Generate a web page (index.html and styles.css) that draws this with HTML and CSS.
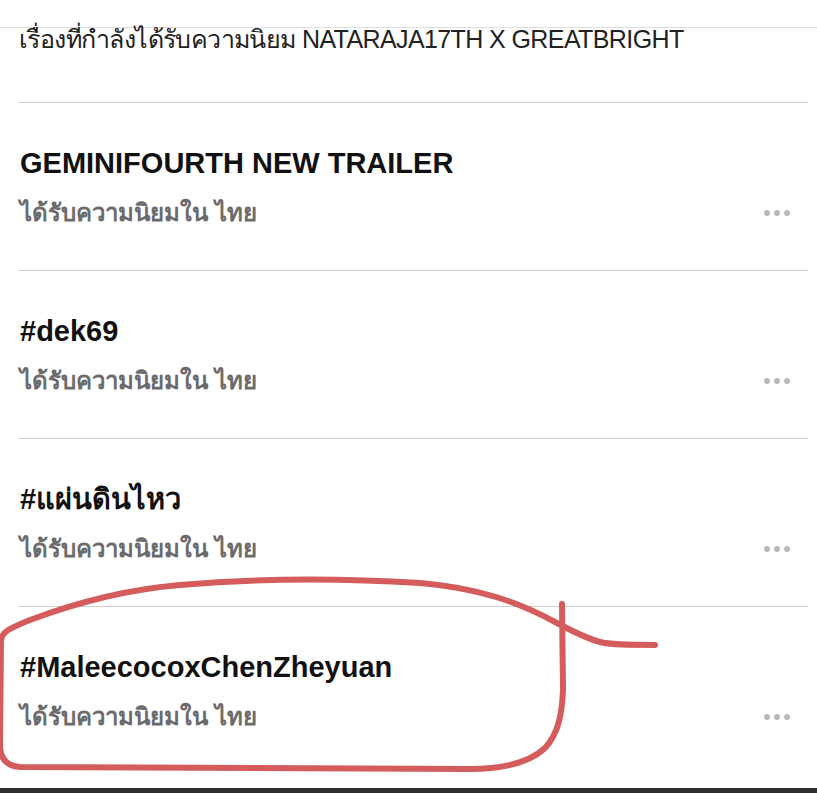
FILE: index.html
```html
<!DOCTYPE html>
<html lang="th">
<head>
<meta charset="utf-8">
<link rel="stylesheet" href="styles.css">
</head>
<body>
<div class="page">
  <div class="top">
    <p class="top-text">เรื่องที่กำลังได้รับความนิยม NATARAJA17TH X GREATBRIGHT</p>
  </div>
  <ul class="trends">
    <li class="trend">
      <div class="trend-title">GEMINIFOURTH NEW TRAILER</div>
      <div class="trend-meta"><span>ได้รับความนิยมใน ไทย</span><span class="more"><i></i><i></i><i></i></span></div>
    </li>
    <li class="trend">
      <div class="trend-title">#dek69</div>
      <div class="trend-meta"><span>ได้รับความนิยมใน ไทย</span><span class="more"><i></i><i></i><i></i></span></div>
    </li>
    <li class="trend">
      <div class="trend-title">#แผ่นดินไหว</div>
      <div class="trend-meta"><span>ได้รับความนิยมใน ไทย</span><span class="more"><i></i><i></i><i></i></span></div>
    </li>
    <li class="trend">
      <div class="trend-title">#MaleecocoxChenZheyuan</div>
      <div class="trend-meta"><span>ได้รับความนิยมใน ไทย</span><span class="more"><i></i><i></i><i></i></span></div>
    </li>
  </ul>
  <div class="bottom-bar"></div>
  <svg class="annotation" width="817" height="793" viewBox="0 0 817 793" aria-hidden="true">
    <path d="M655 645 C630 645 612 645 600 642 C585 638 570 630 555 622 C520 603 480 588 420 583 C340 578 260 578 180 585 C120 590 70 605 30 620 C10 628 2 632 1 640 L0 745 C0 758 6 766 20 767 L470 769 C505 769 530 762 545 748 C558 734 562 715 563 690 L562 604" fill="none" stroke="#d45c5c" stroke-width="6" stroke-linecap="round" stroke-linejoin="round"/>
  </svg>
</div>
</body>
</html>
```
FILE: styles.css
```css
* { box-sizing: border-box; }
html, body { margin: 0; padding: 0; background: #ffffff; }
body { font-family: "Liberation Sans", "Noto Sans", "DejaVu Sans", sans-serif; color: #111; }
.page { position: relative; width: 817px; height: 793px; overflow: hidden; background: #fff; }
.top { height: 102px; padding-top: 28px; }
.top::before { content: ""; display: block; height: 1px; background: #dedede; margin-top: -1px; }
.top-text { margin: -2px 0 0; padding-left: 19px; font-size: 25px; line-height: 26px; color: #222; letter-spacing: -0.6px; }
.trends { list-style: none; margin: 0; padding: 0 9px 0 18px; }
.trend { border-top: 1px solid #cfcfcf; height: 168px; padding: 43px 0 0 2px; }
.trend-title { font-size: 29px; line-height: 35px; font-weight: 700; color: #111; }
.trend-meta { display: flex; justify-content: space-between; align-items: center; margin-top: 17px; font-size: 24px; line-height: 30px; color: #6b6b6b; font-weight: 700; }
.more { display: flex; gap: 4px; margin-right: 18px; }
.more i { display: block; width: 6px; height: 6px; border-radius: 50%; background: #b9b9b9; }
.bottom-bar { position: absolute; left: 0; right: 0; bottom: 0; height: 5px; background: #2e2e2e; }
.annotation { position: absolute; left: 0; top: 0; pointer-events: none; }
```
